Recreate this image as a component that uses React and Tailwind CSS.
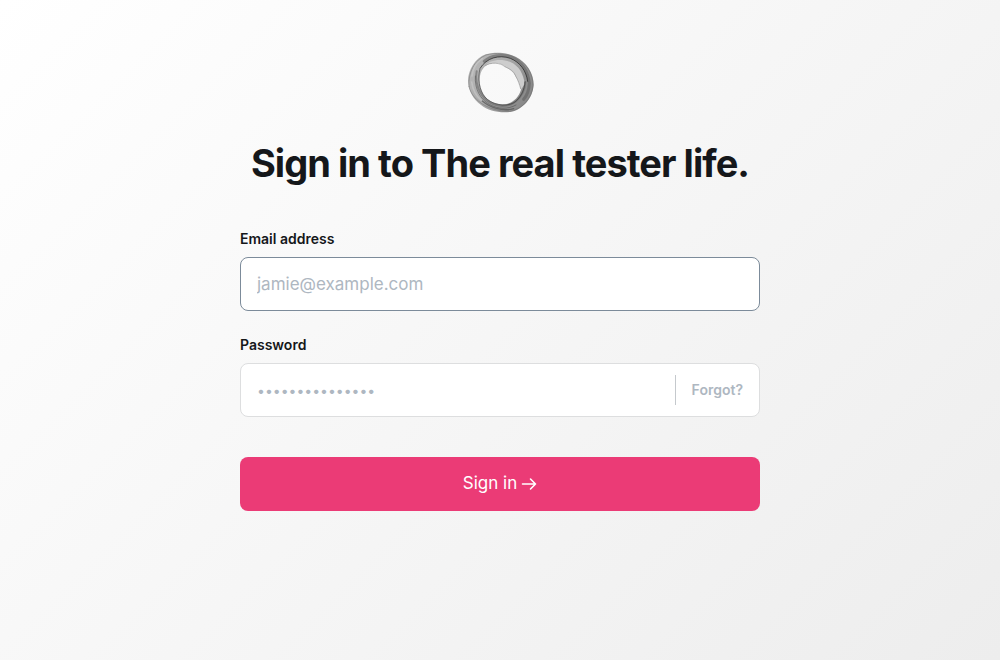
import { useState } from "react";

function RingLogo() {
  return (
    <svg
      className="h-16 w-[72px]"
      viewBox="27 30 216 192"
      role="img"
      aria-label="The real tester life"
    >
      <defs>
        <linearGradient id="ringBand" x1="0" y1="0.2" x2="1" y2="0.7">
          <stop offset="0" stopColor="#b8b8b8" />
          <stop offset="0.4" stopColor="#acacac" />
          <stop offset="0.75" stopColor="#929292" />
          <stop offset="1" stopColor="#868686" />
        </linearGradient>
      </defs>
      <path
        fill="url(#ringBand)"
        fillRule="evenodd"
        d="M39 122C39 92 60 54 92 43C120 35 156 37 182 50C214 66 236 98 236 134C234 172 206 208 166 216C132 220 100 212 78 195C54 178 41 152 39 122ZM75 108C72 126 76 146 86 164C99 184 126 194 150 193C174 189 191 172 198 149C196 134 190 121 182 109C174 92 163 86 151 80C143 71 129 67 114 69C95 71 79 85 75 108Z"
      />
      <path
        fill="#cdcdcd"
        d="M88 79C103 60 136 55 166 66C192 77 207 104 209 132L198 149C193 132 189 121 182 109C174 94 163 88 151 80C143 71 129 67 114 69C103 70 94 74 88 79Z"
      />
      <g fill="none" strokeLinecap="round">
        <path
          stroke="#606060"
          strokeWidth="9"
          opacity="0.6"
          d="M88 64C108 46 140 41 170 52C199 65 219 93 223 130C222 150 216 166 206 178"
        />
        <path
          stroke="#242424"
          strokeWidth="3"
          opacity="0.7"
          d="M76 84C94 54 132 43 166 55C195 67 214 92 218 124"
        />
        <path
          stroke="#606060"
          strokeWidth="6"
          opacity="0.55"
          d="M65 94C59 127 72 162 97 183C124 202 160 203 183 184C201 168 210 145 211 126"
        />
        <path
          stroke="#2e2e2e"
          strokeWidth="2"
          opacity="0.8"
          d="M75 86C67 115 72 150 90 171C107 193 150 203 177 188C197 174 209 149 210 126"
        />
        <path
          stroke="#444444"
          strokeWidth="2"
          opacity="0.75"
          d="M61 108C58 146 76 179 105 194C129 207 158 209 183 195"
        />
        <path
          stroke="#4c4c4c"
          strokeWidth="4"
          opacity="0.65"
          d="M82 183C108 205 144 215 176 206"
        />
        <path
          stroke="#707070"
          strokeWidth="2"
          opacity="0.8"
          d="M42 140C38 98 59 59 93 45C122 37 158 39 184 54C216 71 234 104 234 136C231 174 203 208 163 214C112 215 53 188 42 140"
        />
        <path
          stroke="#cccccc"
          strokeWidth="5"
          opacity="0.6"
          d="M51 108C53 88 64 68 82 56M50 126C53 149 63 168 79 181"
        />
        <path
          stroke="#979797"
          strokeWidth="2"
          d="M91 76C105 67 137 67 149 80C163 86 176 92 182 108C190 122 193 132 197 146"
        />
      </g>
    </svg>
  );
}

function ArrowRight() {
  return (
    <svg
      className="size-4"
      viewBox="0 0 16 16"
      fill="none"
      stroke="currentColor"
      strokeWidth="1.6"
      strokeLinecap="round"
      strokeLinejoin="round"
      aria-hidden="true"
    >
      <path d="M1.5 8H14.5M9.5 3L14.5 8L9.5 13" />
    </svg>
  );
}

export default function App() {
  const [email, setEmail] = useState("");
  const [password, setPassword] = useState("");

  return (
    <main className="flex min-h-screen flex-col items-center bg-linear-135 from-white to-[#ededed] px-6 pt-[50px] pb-12 font-[Inter,sans-serif] text-[#15171a] antialiased">
      <RingLogo />
      <h1 className="mt-6 text-center text-[38px] leading-[50px] font-bold tracking-tight">
        Sign in to The real tester life.
      </h1>
      <form
        className="mt-10 flex w-full max-w-[520px] flex-col"
        onSubmit={(event) => event.preventDefault()}
      >
        <div className="flex flex-col gap-2">
          <label
            htmlFor="email"
            className="text-sm leading-[21px] font-semibold"
          >
            Email address
          </label>
          <input
            id="email"
            type="email"
            placeholder="jamie@example.com"
            value={email}
            onChange={(event) => setEmail(event.target.value)}
            className="h-[54px] w-full rounded-lg border border-[#7c8b9a] bg-white px-4 text-[17px] outline-none placeholder:text-[#aeb7c1]"
          />
        </div>
        <div className="mt-[23px] flex flex-col gap-2">
          <label
            htmlFor="password"
            className="text-sm leading-[21px] font-semibold"
          >
            Password
          </label>
          <div className="flex h-[54px] items-center rounded-lg border border-[#dddedf] bg-white">
            <input
              id="password"
              type="password"
              placeholder="•••••••••••••••"
              value={password}
              onChange={(event) => setPassword(event.target.value)}
              className="h-full min-w-0 flex-1 rounded-lg px-4 text-sm outline-none placeholder:text-[#aeb7c1]"
            />
            <button
              type="button"
              className="h-[30px] border-l border-[#c5c9cd] px-4 text-sm font-semibold text-[#aeb7c1]"
            >
              Forgot?
            </button>
          </div>
        </div>
        <button
          type="submit"
          className="mt-10 flex h-[54px] w-full items-center justify-center gap-1 rounded-lg bg-[#eb3b76] text-[17px] text-white"
        >
          Sign in
          <ArrowRight />
        </button>
      </form>
    </main>
  );
}
